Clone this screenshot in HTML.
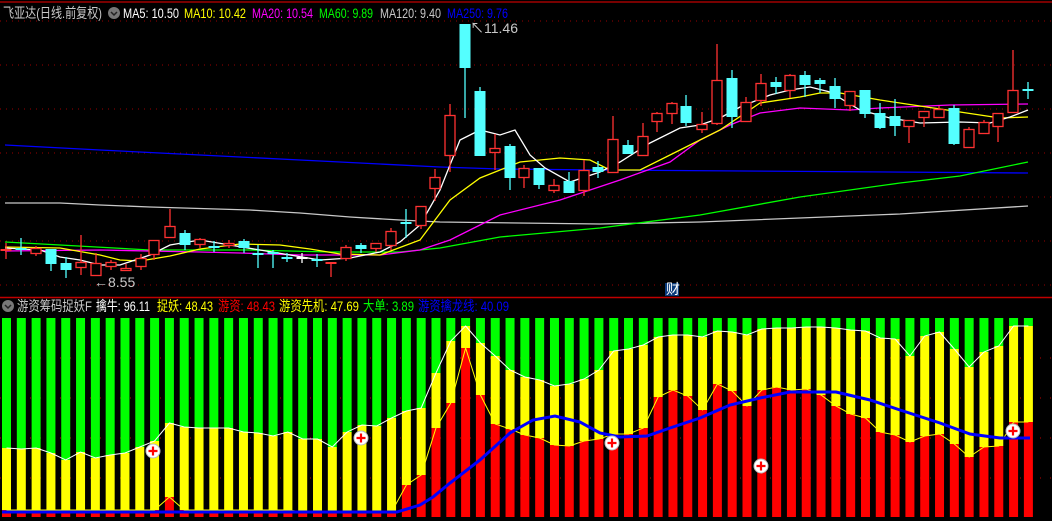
<!DOCTYPE html>
<html><head><meta charset="utf-8"><style>
html,body{margin:0;padding:0;background:#000;width:1052px;height:521px;overflow:hidden}
svg{display:block}
text{font-family:"Liberation Sans","Noto Sans CJK SC",sans-serif;font-size:14px}
</style></head><body>
<svg id="s" width="1052" height="521" xmlns="http://www.w3.org/2000/svg">
<rect width="1052" height="521" fill="#000"/>
<line x1="0" y1="2" x2="1052" y2="2" stroke="#a00000" stroke-width="1.5"/>
<line x1="0" y1="297.5" x2="1052" y2="297.5" stroke="#c00000" stroke-width="1.5"/>
<g id="grid"></g>
<g id="bars"></g>
<g id="lines"></g>
<g id="candles"></g>
<text x="3" y="18" fill="#c8c8c8" textLength="99" lengthAdjust="spacingAndGlyphs">飞亚达(日线.前复权)</text>
<circle cx="114" cy="13" r="6" fill="#777"/>
<path d="M111 12 L114 15 L117 12" stroke="#222" stroke-width="1.5" fill="none"/>
<text x="123" y="18" fill="#fff" textLength="56" lengthAdjust="spacingAndGlyphs">MA5: 10.50</text>
<text x="184" y="18" fill="#ffff00" textLength="62" lengthAdjust="spacingAndGlyphs">MA10: 10.42</text>
<text x="252" y="18" fill="#ff00ff" textLength="61" lengthAdjust="spacingAndGlyphs">MA20: 10.54</text>
<text x="319" y="18" fill="#00ff00" textLength="54" lengthAdjust="spacingAndGlyphs">MA60: 9.89</text>
<text x="380" y="18" fill="#c8c8c8" textLength="61" lengthAdjust="spacingAndGlyphs">MA120: 9.40</text>
<text x="447" y="18" fill="#0000ff" textLength="61" lengthAdjust="spacingAndGlyphs">MA250: 9.76</text>
<text x="470" y="33" fill="#c8c8c8" font-size="12">↖11.46</text>
<text x="94" y="287" fill="#c8c8c8" font-size="12">←8.55</text>
<rect x="665" y="283" width="14" height="13" fill="#0a3a7a"/>
<text x="666" y="294" fill="#fff" font-size="12">财</text>
<circle cx="8" cy="306" r="6" fill="#777"/>
<path d="M5 305 L8 308 L11 305" stroke="#222" stroke-width="1.5" fill="none"/>
<text x="17" y="311" fill="#c8c8c8" textLength="75" lengthAdjust="spacingAndGlyphs">游资筹码捉妖F</text>
<text x="96" y="311" fill="#fff" textLength="54" lengthAdjust="spacingAndGlyphs">擒牛: 96.11</text>
<text x="157" y="311" fill="#ffff00" textLength="56" lengthAdjust="spacingAndGlyphs">捉妖: 48.43</text>
<text x="218" y="311" fill="#ff0000" textLength="57" lengthAdjust="spacingAndGlyphs">游资: 48.43</text>
<text x="279" y="311" fill="#ffff00" textLength="80" lengthAdjust="spacingAndGlyphs">游资先机: 47.69</text>
<text x="363" y="311" fill="#00ff00" textLength="51" lengthAdjust="spacingAndGlyphs">大单: 3.89</text>
<text x="418" y="311" fill="#0000ff" textLength="91" lengthAdjust="spacingAndGlyphs">游资擒龙线: 40.09</text>
<g id="marks"></g>
</svg>
<script>
var NS="http://www.w3.org/2000/svg";
function el(p,t,a){var e=document.createElementNS(NS,t);for(var k in a)e.setAttribute(k,a[k]);document.getElementById(p).appendChild(e);return e;}
[21,65,109,153,197,241,285].forEach(function(y){el("grid","line",{x1:0,x2:1052,y1:y,y2:y,stroke:"#900","stroke-dasharray":"1 5"});});
[358,398,438,478].forEach(function(y){el("grid","line",{x1:0,x2:1052,y1:y,y2:y,stroke:"#b00","stroke-dasharray":"1 9"});});
var Y=[448,449,448,453,460,452,458,455,453,447,441,423,427,428,428,428,432,433,436,432,439,439,447,432,425,426,418,411,408,373,341,326,343,356,370,377,380,386,384,379,370,351,349,345,337,335,335,337,331,332,335,329,328,328,327,327,328,330,331,338,339,356,336,332,349,367,352,346,326,326];
var R=[510,510,510,510,510,510,510,510,510,510,510,497,510,510,510,510,510,510,510,510,512,512,512,512,512,512,512,485,475,428,403,348,395,424,429,435,438,445,446,441,439,434,434,428,397,390,396,410,384,391,406,390,387,390,389,395,406,414,418,432,435,442,436,434,444,457,447,446,422,422];
var wp=[],yp=[];
for(var i=0;i<70;i++){var x=2+14.81*i;
el("bars","rect",{x:x,y:318,width:9,height:Y[i]-318,fill:"#00ff00"});
el("bars","rect",{x:x,y:Y[i],width:9,height:R[i]-Y[i],fill:"#ffff00"});
el("bars","rect",{x:x,y:R[i],width:9,height:517-R[i],fill:"#ff0000"});
wp.push((x+4.5)+","+Y[i]);yp.push((x+4.5)+","+R[i]);}
el("lines","polyline",{points:wp.join(" "),stroke:"#fff","stroke-width":1,fill:"none"});
el("lines","polyline",{points:yp.join(" "),stroke:"#ffff00","stroke-width":1,fill:"none"});
el("lines","polyline",{points:"2,512 397,512 420,505 433,497 450,483 480,460 510,433 533,420 555,416 580,422 600,433 620,437 647,436 670,428 700,418 730,405 760,398 790,392 836,392 870,400 900,410 940,423 970,434 1000,438 1030,438",stroke:"#0000ff","stroke-width":3,fill:"none"});
function pl(p,c){el("lines","polyline",{points:p,stroke:c,"stroke-width":1.3,fill:"none"});}
pl("5,145 100,150 200,155 300,160 380,164 440,167 500,169 600,170 1028,173","#0000ff");
pl("5,203 60,203 100,205 150,207 250,210 300,213 350,217 400,220 440,222 600,224 700,222 800,218 900,214 1028,206","#c8c8c8");
pl("5,242 60,245 150,250 250,250 330,252 400,252 440,248 500,237 600,228 700,215 800,197 900,183 960,176 1028,162","#00ff00");
pl("5,251 100,250 200,252 240,253 300,255 380,255 420,250 450,240 500,215 560,200 620,180 670,162 700,140 730,125 760,113 800,108 850,110 880,108 950,105 1028,104","#ff00ff");
pl("5,247 60,248 100,255 120,260 140,261 170,256 200,249 240,244 280,245 310,249 340,254 380,255 420,240 450,200 480,178 520,162 560,158 590,160 610,170 640,170 680,150 720,130 760,103 800,97 820,93 840,93 880,100 920,106 960,112 1000,118 1028,117","#ffff00");
pl("5,248 40,250 60,257 80,260 100,265 120,265 150,255 170,245 200,240 230,245 260,250 290,255 320,260 350,258 380,252 400,242 420,225 440,190 460,140 480,130 500,135 515,130 530,155 545,168 570,182 600,172 620,162 650,143 680,128 700,125 720,118 740,107 770,95 790,90 810,87 830,92 860,110 890,118 920,123 960,122 990,123 1010,117 1028,110","#fff");
var C=[[6,249,251,243,259,'r'],[21,248,250,238,255,'c'],[36,248,254,246,256,'r'],[51,249,264,249,271,'c'],[66,263,270,257,278,'c'],[81,262,268,235,275,'r'],[96,263,276,253,276,'r'],[111,262,267,260,270,'r'],[126,268,271,264,271,'r'],[141,258,267,254,270,'r'],[154,240,255,240,260,'r'],[170,226,238,209,238,'r'],[185,233,245,230,250,'c'],[200,239,245,238,248,'r'],[214,246,247,241,252,'c'],[229,243,246,240,248,'r'],[244,241,248,239,253,'c'],[258,253,254,245,268,'c'],[273,252,253,250,268,'c'],[287,257,258,253,262,'c'],[302,257,258,253,263,'w'],[317,259,261,254,267,'c'],[331,262,263,262,277,'r'],[346,247,259,245,261,'r'],[361,245,249,243,253,'c'],[376,243,249,243,252,'r'],[391,231,246,228,250,'r'],[406,222,223,209,238,'c'],[421,206,226,206,229,'r'],[435,177,189,169,201,'r'],[450,115,156,104,172,'r'],[465,24,68,24,118,'c'],[480,91,156,87,156,'c'],[495,148,153,134,170,'r'],[510,146,178,144,190,'c'],[524,168,178,165,188,'r'],[539,168,185,168,189,'c'],[554,185,191,179,193,'r'],[569,181,193,172,193,'c'],[584,170,191,160,196,'r'],[598,167,172,161,178,'c'],[613,139,173,116,173,'r'],[628,145,154,140,154,'c'],[643,136,156,123,156,'r'],[657,113,122,112,132,'r'],[672,103,114,102,124,'r'],[686,106,123,95,126,'c'],[702,124,130,112,133,'r'],[717,80,124,44,125,'r'],[732,78,117,70,128,'c'],[746,102,122,97,122,'r'],[761,83,101,74,106,'r'],[776,82,87,77,94,'c'],[790,75,91,74,98,'r'],[805,75,85,71,97,'c'],[820,80,84,78,93,'c'],[835,86,99,78,108,'c'],[850,91,106,91,111,'r'],[865,90,114,90,118,'c'],[880,113,128,103,129,'c'],[895,116,126,99,136,'c'],[909,120,127,120,143,'r'],[924,111,118,111,127,'r'],[939,109,118,106,118,'r'],[954,108,144,105,145,'c'],[969,129,148,127,148,'r'],[984,122,134,120,134,'r'],[998,113,127,113,142,'r'],[1013,90,113,50,113,'r'],[1028,89,90,82,99,'c']];
C.forEach(function(c){var x=c[0],col=c[5]=='r'?'#ff3232':(c[5]=='c'?'#54ffff':'#fff');
el("candles","line",{x1:x,x2:x,y1:c[3],y2:c[4],stroke:col,"stroke-width":1.3});
var h=c[2]-c[1];
if(h<=2){el("candles","rect",{x:x-5.5,y:c[1],width:11,height:2,fill:col});}
else if(c[5]=='r'){el("candles","rect",{x:x-5,y:c[1]+0.5,width:10,height:h-1,fill:"#000",stroke:col,"stroke-width":1.3});}
else{el("candles","rect",{x:x-5.5,y:c[1],width:11,height:h,fill:col});}
});
[[153,451],[361,438],[612,443],[761,466],[1013,431]].forEach(function(p){
el("marks","circle",{cx:p[0],cy:p[1],r:7,fill:"#fff",stroke:"#bbb","stroke-width":1});
el("marks","path",{d:"M"+(p[0]-4.5)+" "+p[1]+"h9M"+p[0]+" "+(p[1]-4.5)+"v9",stroke:"#ff0000","stroke-width":2.2});});
</script>
</body></html>
